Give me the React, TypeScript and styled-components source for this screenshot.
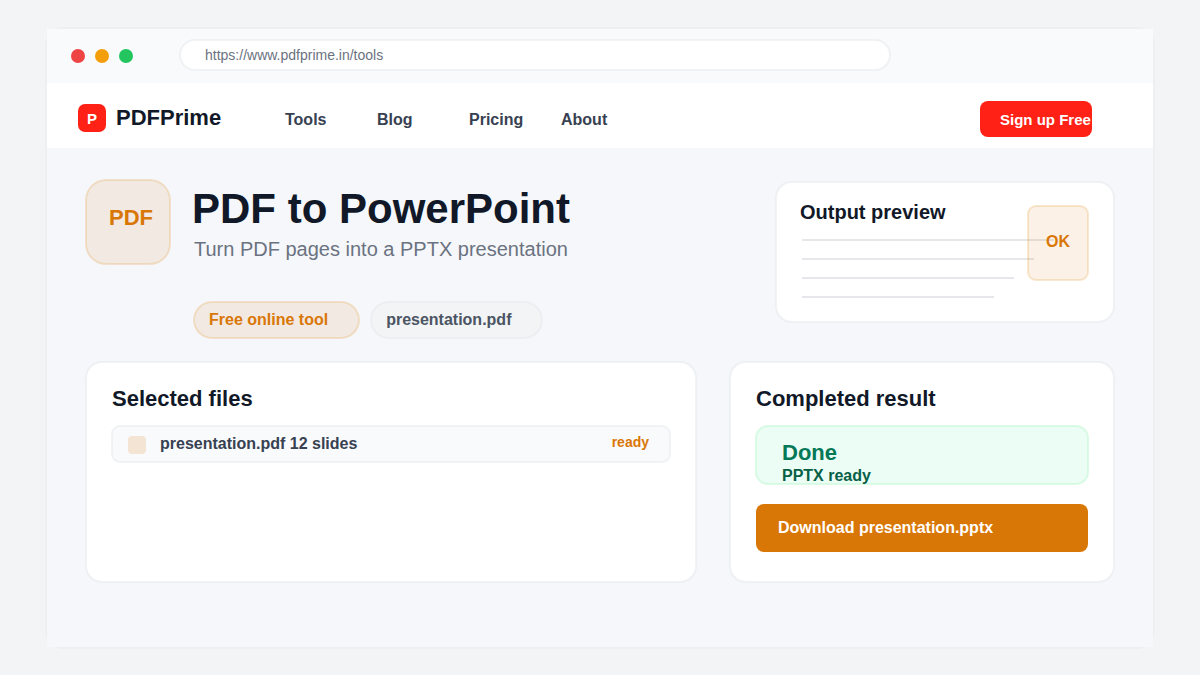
import React from "react";
import styled, { createGlobalStyle, css } from "styled-components";

const GlobalStyle = createGlobalStyle`
  *, *::before, *::after { box-sizing: border-box; }
  body {
    margin: 0;
    background: #f3f4f6;
    color: #111827;
    font-family: "Liberation Sans", Arial, Helvetica, sans-serif;
  }
  h1, h2, p, ul { margin: 0; padding: 0; }
  button, input { font-family: inherit; border: 0; }
`;

/* Hairline that sits half inside and half outside the edge of its box. */
const hairline = (color: string) => css`
  border: 1px solid ${color};
  box-shadow: 0 0 0 1px ${color};
`;

const gray = "rgba(229, 231, 235, 0.5)";
const amber = "#d97706";
const amberTint = "rgba(217, 119, 6, 0.1)";
const amberLine = "rgba(227, 140, 20, 0.2)";

const Page = styled.div`
  display: flex;
  min-height: 100vh;
  padding: 27px 45px 26px;
`;

const BrowserWindow = styled.div`
  flex: 1;
  min-width: 0;
  display: flex;
  flex-direction: column;
  border: 2px solid #eeeff1;
  border-radius: 18px;
`;

const Chrome = styled.div`
  display: flex;
  align-items: center;
  height: 54px;
  padding: 0 263px 0 24px;
  background: #f9fafc;
`;

const Lights = styled.div`
  display: flex;
  gap: 10px;
  margin-right: 47px;
`;

const Light = styled.span<{ $color: string }>`
  width: 14px;
  height: 14px;
  border-radius: 50%;
  background: ${(p) => p.$color};
`;

const AddressBar = styled.input`
  flex: 1;
  min-width: 0;
  height: 30px;
  margin-bottom: 2px;
  padding: 0 24px;
  border-radius: 15px;
  background: #fff;
  color: #6b7280;
  font-size: 14px;
  outline: none;
  ${hairline(gray)}
`;

const Header = styled.header`
  display: flex;
  align-items: center;
  padding: 18px 61px 11px 31px;
  background: #fff;
`;

const Brand = styled.a`
  display: flex;
  align-items: center;
  gap: 10px;
  width: 207px;
  margin-bottom: 2px;
  color: #111827;
  font-size: 22px;
  font-weight: 700;
  line-height: 28px;
  text-decoration: none;
`;

const BrandMark = styled.span`
  width: 28px;
  height: 28px;
  border-radius: 7px;
  background: #ff2116;
  color: #fff;
  font-size: 15px;
  line-height: 30px;
  text-align: center;
`;

const Nav = styled.nav`
  flex: 1;
  display: grid;
  grid-template-columns: repeat(4, 92px);
  padding-top: 2px;
`;

const NavLink = styled.a`
  color: #374151;
  font-size: 16px;
  font-weight: 700;
  line-height: 28px;
  text-decoration: none;
`;

const SignUp = styled.button`
  width: 112px;
  height: 36px;
  padding: 0 0 0 20px;
  border-radius: 8px;
  background: #ff2116;
  color: #fff;
  font-size: 15px;
  font-weight: 700;
  text-align: left;
  white-space: nowrap;
`;

const Main = styled.main`
  flex: 1;
  padding: 32px 39px 65px;
  background: #f5f7fb;
`;

const Hero = styled.section`
  display: flex;
  align-items: flex-start;
`;

const ToolIcon = styled.div`
  flex: none;
  width: 84px;
  height: 84px;
  margin-right: 22px;
  padding: 23px 0 0 22px;
  border-radius: 20px;
  background: ${amberTint};
  color: ${amber};
  font-size: 22px;
  font-weight: 700;
  line-height: 28px;
  ${hairline(amberLine)}
`;

const HeroText = styled.div`
  flex: 1;
  min-width: 0;
  padding-top: 5px;
`;

const Title = styled.h1`
  font-size: 42px;
  line-height: 48px;
`;

const Subtitle = styled.p`
  padding: 4px 0 0 2px;
  color: #6b7280;
  font-size: 20px;
  line-height: 24px;
`;

const Pills = styled.div`
  display: flex;
  gap: 12px;
  padding: 41px 0 0 2px;
`;

const Pill = styled.span<{ $accent?: boolean }>`
  height: 36px;
  padding: 0 30px 0 14px;
  border-radius: 18px;
  background: ${(p) => (p.$accent ? amberTint : "#f3f4f6")};
  color: ${(p) => (p.$accent ? amber : "#4b5563")};
  font-size: 16px;
  font-weight: 700;
  line-height: 34px;
  ${(p) => hairline(p.$accent ? amberLine : gray)}
`;

const Panel = styled.section`
  position: relative;
  border-radius: 16px;
  background: #fff;
  ${hairline(gray)}
`;

const Preview = styled(Panel)`
  flex: none;
  width: 338px;
  margin-top: 2px;
  padding: 17px 23px 23px;
`;

const PreviewTitle = styled.h2`
  font-size: 20px;
  line-height: 24px;
`;

const PreviewLines = styled.div`
  display: flex;
  flex-direction: column;
  gap: 17px;
  padding: 15px 0 0 2px;
`;

const PreviewLine = styled.span<{ $width: number }>`
  width: ${(p) => p.$width}px;
  height: 2px;
  background: #e5e7eb;
`;

const OkBadge = styled.div`
  position: absolute;
  top: 23px;
  right: 25px;
  width: 60px;
  height: 74px;
  padding-top: 25px;
  border-radius: 8px;
  background: ${amberTint};
  color: ${amber};
  font-size: 16px;
  font-weight: 700;
  line-height: 20px;
  text-align: center;
  ${hairline(amberLine)}
`;

const Columns = styled.div`
  display: grid;
  grid-template-columns: minmax(0, 1fr) 384px;
  gap: 34px;
  margin-top: 24px;
`;

const Card = styled(Panel)`
  padding: 22px 25px 29px;
`;

const CardTitle = styled.h2`
  margin-bottom: 13px;
  font-size: 22px;
  line-height: 28px;
`;

const FileList = styled.ul`
  list-style: none;
`;

const FileRow = styled.li`
  display: flex;
  align-items: center;
  height: 36px;
  padding: 0 20px 0 15px;
  border-radius: 8px;
  background: #f9fafc;
  color: #374151;
  font-size: 16px;
  font-weight: 700;
  line-height: 20px;
  ${hairline(gray)}
`;

const FileThumb = styled.span`
  width: 18px;
  height: 18px;
  margin: 2px 14px 0 0;
  border-radius: 4px;
  background: rgba(217, 119, 6, 0.16);
`;

const FileStatus = styled.span`
  margin: 0 0 4px auto;
  color: ${amber};
  font-size: 14px;
`;

const Result = styled.div`
  display: flex;
  flex-direction: column;
  gap: 3px;
  height: 58px;
  margin-bottom: 20px;
  padding: 14px 25px 0;
  border-radius: 12px;
  background: #ecfdf5;
  font-weight: 700;
  ${hairline("rgba(187, 247, 208, 0.5)")}
`;

const ResultState = styled.p`
  color: #047857;
  font-size: 22px;
  line-height: 24px;
`;

const ResultNote = styled.p`
  color: #065f46;
  font-size: 16px;
  line-height: 16px;
`;

const Download = styled.button`
  display: block;
  width: 100%;
  height: 48px;
  padding: 0 22px;
  border-radius: 8px;
  background: ${amber};
  color: #fff;
  font-size: 16px;
  font-weight: 700;
  text-align: left;
`;

const lights = ["#ef4444", "#f59e0b", "#22c55e"];
const links = ["Tools", "Blog", "Pricing", "About"];
const lineWidths = [252, 232, 212, 192];

export default function App() {
  return (
    <Page>
      <GlobalStyle />
      <BrowserWindow>
        <Chrome>
          <Lights>
            {lights.map((color) => (
              <Light key={color} $color={color} />
            ))}
          </Lights>
          <AddressBar
            type="text"
            aria-label="Address"
            defaultValue="https://www.pdfprime.in/tools"
          />
        </Chrome>
        <Header>
          <Brand href="#">
            <BrandMark>P</BrandMark>
            PDFPrime
          </Brand>
          <Nav>
            {links.map((link) => (
              <NavLink key={link} href="#">
                {link}
              </NavLink>
            ))}
          </Nav>
          <SignUp type="button">Sign up Free</SignUp>
        </Header>
        <Main>
          <Hero>
            <ToolIcon>PDF</ToolIcon>
            <HeroText>
              <Title>PDF to PowerPoint</Title>
              <Subtitle>Turn PDF pages into a PPTX presentation</Subtitle>
              <Pills>
                <Pill $accent>Free online tool</Pill>
                <Pill>presentation.pdf</Pill>
              </Pills>
            </HeroText>
            <Preview>
              <PreviewTitle>Output preview</PreviewTitle>
              <PreviewLines>
                {lineWidths.map((width) => (
                  <PreviewLine key={width} $width={width} />
                ))}
              </PreviewLines>
              <OkBadge>OK</OkBadge>
            </Preview>
          </Hero>
          <Columns>
            <Card>
              <CardTitle>Selected files</CardTitle>
              <FileList>
                <FileRow>
                  <FileThumb />
                  presentation.pdf 12 slides
                  <FileStatus>ready</FileStatus>
                </FileRow>
              </FileList>
            </Card>
            <Card>
              <CardTitle>Completed result</CardTitle>
              <Result>
                <ResultState>Done</ResultState>
                <ResultNote>PPTX ready</ResultNote>
              </Result>
              <Download type="button">Download presentation.pptx</Download>
            </Card>
          </Columns>
        </Main>
      </BrowserWindow>
    </Page>
  );
}
